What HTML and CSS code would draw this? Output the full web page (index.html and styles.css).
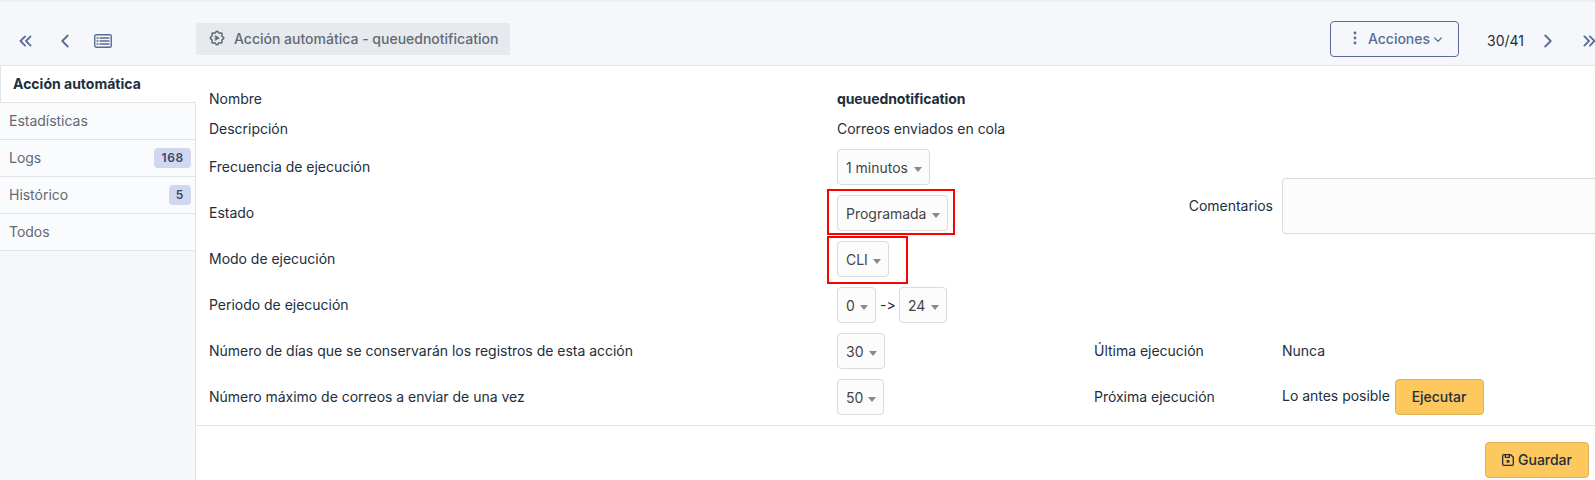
FILE: index.html
```html
<!DOCTYPE html>
<html lang="es">
<head>
<meta charset="utf-8">
<title>Acción automática</title>
<link rel="stylesheet" href="styles.css">
</head>
<body>
<header class="topbar">
  <nav class="nav-left">
    <svg class="icon" viewBox="0 0 24 24"><path d="M11 7l-5 5l5 5M17 7l-5 5l5 5"/></svg>
    <svg class="icon prev" viewBox="0 0 24 24"><path d="M15 6l-6 6l6 6"/></svg>
    <svg class="list-icon" viewBox="0 0 18 14"><rect x=".75" y=".75" width="16.5" height="12.5" rx="1.5"/><path d="M6 4h9M6 7h9M6 10h9M3 4h1M3 7h1M3 10h1"/></svg>
  </nav>
  <h1 class="title">
    <svg class="gear" viewBox="0 0 24 24"><path d="M10.325 4.317c.426-1.756 2.924-1.756 3.35 0a1.724 1.724 0 0 0 2.573 1.066c1.543-.94 3.31.826 2.37 2.37a1.724 1.724 0 0 0 1.065 2.572c1.756.426 1.756 2.924 0 3.35a1.724 1.724 0 0 0-1.066 2.573c.94 1.543-.826 3.31-2.37 2.37a1.724 1.724 0 0 0-2.572 1.065c-.426 1.756-2.924 1.756-3.35 0a1.724 1.724 0 0 0-2.573-1.066c-1.543.94-3.31-.826-2.37-2.37a1.724 1.724 0 0 0-1.065-2.572c-1.756-.426-1.756-2.924 0-3.35a1.724 1.724 0 0 0 1.066-2.573c-.94-1.543.826-3.31 2.37-2.37c1 .608 2.296.07 2.572-1.065z"/><path class="play" d="M10 9l5 3l-5 3z"/></svg>
    <span>Acción automática - queuednotification</span>
  </h1>
  <div class="nav-right">
    <button class="actions"><svg class="dots" viewBox="0 0 4 14"><circle cx="2" cy="2" r="1.4"/><circle cx="2" cy="7" r="1.4"/><circle cx="2" cy="12" r="1.4"/></svg><span>Acciones</span><svg class="caret" viewBox="0 0 8 6"><path d="M.7 1l3.3 3.4L7.3 1"/></svg></button>
    <span class="counter">30/41</span>
    <svg class="icon next" viewBox="0 0 24 24"><path d="M9 6l6 6l-6 6"/></svg>
    <svg class="icon last" viewBox="0 0 24 24"><path d="M7 7l5 5l-5 5M13 7l5 5l-5 5"/></svg>
  </div>
</header>
<div class="body">
  <aside class="tabs">
    <a class="tab active">Acción automática</a>
    <a class="tab">Estadísticas</a>
    <a class="tab">Logs<span class="badge">168</span></a>
    <a class="tab">Histórico<span class="badge">5</span></a>
    <a class="tab">Todos</a>
    <div class="rest"></div>
  </aside>
  <main class="main">
    <div class="form">
      <div class="fields">
        <div class="label">Nombre</div><div class="value"><b class="name">queuednotification</b></div>
        <div class="label">Descripción</div><div class="value">Correos enviados en cola</div>
        <div class="label">Frecuencia de ejecución</div><div class="value"><span class="select w-min">1 minutos</span></div>
        <div class="label">Estado</div><div class="value"><span class="select w-prog">Programada</span><i class="mark mark-state"></i></div>
        <div class="label">Modo de ejecución</div><div class="value"><span class="select w-cli">CLI</span><i class="mark mark-mode"></i></div>
        <div class="label">Periodo de ejecución</div><div class="value"><span class="select w-0">0</span><span class="arrow">-&gt;</span><span class="select w-24">24</span></div>
        <div class="label">Número de días que se conservarán los registros de esta acción</div><div class="value"><span class="select w-30">30</span></div>
        <div class="label">Número máximo de correos a enviar de una vez</div><div class="value"><span class="select w-50">50</span></div>
      </div>
      <div class="side">
        <div class="comment-label">Comentarios</div><div class="comment-cell"><div class="textarea"></div></div>
        <div class="label">Última ejecución</div><div class="value">Nunca</div>
        <div class="label">Próxima ejecución</div><div class="value"><span class="soon">Lo antes posible</span><button class="btn run">Ejecutar</button></div>
      </div>
    </div>
    <footer class="footer"><button class="btn save"><svg class="disk" viewBox="0 0 24 24"><path d="M6 4h10l4 4v10a2 2 0 0 1-2 2H6a2 2 0 0 1-2-2V6a2 2 0 0 1 2-2M14 4v4H8V4"/><circle cx="12" cy="14" r="1.5"/></svg><span>Guardar</span></button></footer>
  </main>
</div>
</body>
</html>
```
FILE: styles.css
```css
* { box-sizing: border-box; }
body {
  margin: 0;
  width: 1595px;
  height: 480px;
  overflow: hidden;
  background: #f5f7fb;
  color: #232e3c;
  font: 14px/20px Inter, "Noto Sans", sans-serif;
  font-feature-settings: "calt" 0;
  letter-spacing: -.02px;
}
svg { display: block; flex: none; fill: none; stroke: #5a6c98; stroke-width: 2; stroke-linecap: round; stroke-linejoin: round; }
button { font: inherit; letter-spacing: inherit; margin: 0; }
.topbar {
  display: flex;
  height: 65px;
  overflow: hidden;
  background: linear-gradient(#e9ebef 0, #eceef2 1px, #f5f7fb 3px);
}
.nav-left { display: flex; flex: none; align-items: center; width: 196px; padding: 17px 0 0 15px; }
.icon { width: 22px; height: 22px; }
.prev { margin-left: 17px; }
.list-icon { width: 18px; height: 14px; margin-left: 18px; stroke-width: 1.4; }
.title {
  display: flex;
  flex: none;
  align-items: center;
  width: 314px;
  height: 32px;
  margin: 23px 0 0;
  padding: 0 12px;
  gap: 8px;
  border-radius: 2px;
  background: #e6e9ed;
  color: #626976;
  font-size: 14px;
  font-weight: 500;
  letter-spacing: 0;
  white-space: nowrap;
}
.gear { width: 18px; height: 18px; margin-bottom: 2px; stroke: #626976; }
.play { fill: #626976; stroke-width: 1; }
.nav-right { display: flex; flex: none; align-items: flex-start; margin-left: 820px; padding-top: 21px; }
.actions {
  display: flex;
  align-items: center;
  width: 129px;
  height: 36px;
  padding: 0 17px 0 22px;
  border: 1px solid #5a6c98;
  border-radius: 4px;
  background: none;
  color: #5a6c98;
  font-weight: 500;
}
.dots { width: 4px; height: 14px; margin: 0 11px 2px 0; fill: #5a6c98; stroke: none; }
.caret { width: 8px; height: 6px; margin: 2px 0 0 4px; stroke-width: 1.2; }
.counter { width: 50px; margin: 10px 0 0 28px; }
.next { margin-top: 9px; }
.last { margin: 9px 0 0 19px; }
.body { display: flex; height: 415px; }
.tabs { display: flex; flex-direction: column; flex: none; width: 196px; }
.tab {
  display: flex;
  align-items: center;
  justify-content: space-between;
  height: 37px;
  padding: 0 4px 0 9px;
  border: solid #e2e5e8;
  border-width: 0 1px 1px 0;
  background: #fafbfc;
  color: #626976;
}
.tab.active { height: 38px; padding: 0 4px 0 12px; border-width: 1px 0 1px 1px; background: #fff; color: #232e3c; font-weight: 700; letter-spacing: 0; }
.badge {
  height: 20px;
  padding: 0 7px;
  border-radius: 4px;
  background: #d0d8ef;
  color: #3b4663;
  font-size: 12px;
  line-height: 20px;
  font-weight: 600;
  letter-spacing: .7px;
}
.rest { flex: 1; border-right: 1px solid #e2e5e8; }
.main { flex: 1; min-width: 0; border-top: 1px solid #e2e5e8; background: #fff; }
.form { display: flex; height: 360px; padding: 18px 0 0 13px; border-bottom: 1px solid #e2e5e8; }
.fields { display: grid; grid-template-columns: 628px 257px; grid-template-rows: 30px 30px repeat(6, 46px); }
.side { display: grid; flex: 1; grid-template-columns: 188px 1fr; grid-template-rows: 244px 46px 46px; }
.label { align-self: center; }
.value { position: relative; display: flex; align-items: center; }
.name { letter-spacing: -.1px; }
.select {
  display: flex;
  align-items: center;
  justify-content: space-between;
  height: 36px;
  padding: 2px 7px 0 8px;
  border: 1px solid #d9dbde;
  border-radius: 4px;
  background: #fcfcfc;
  color: #444;
}
.select::after { content: ""; margin-top: 2px; border: 4px solid transparent; border-top: 5px solid #888; border-bottom: 0; }
.w-min { width: 93px; }
.w-prog { width: 111px; }
.w-cli { width: 52px; }
.w-0 { width: 39px; }
.w-24 { width: 48px; }
.w-30 { width: 48px; }
.w-50 { width: 47px; }
.arrow { width: 23px; padding-left: 4px; }
.mark { position: absolute; left: -10px; border: 2px solid #f00; }
.mark-state { top: -1px; width: 128px; height: 46px; }
.mark-mode { top: 0; width: 81px; height: 48px; }
.comment-label { align-self: center; padding-right: 9px; text-align: right; }
.comment-cell { display: flex; align-items: center; }
.textarea { flex: 1; height: 56px; border: solid #d9dbde; border-width: 1px 0 1px 1px; border-radius: 4px 0 0 4px; background: #fcfcfc; }
.soon { width: 113px; padding-bottom: 2px; white-space: nowrap; }
.btn {
  display: flex;
  align-items: center;
  justify-content: center;
  height: 36px;
  padding: 0;
  border: 1px solid #dcb25b;
  border-radius: 4px;
  background: #fdc85e;
  color: #232e3c;
  font-weight: 500;
}
.run { width: 89px; padding-right: 1px; }
.footer { display: flex; justify-content: flex-end; padding: 16px 6px 0 0; }
.save { width: 104px; gap: 2px; padding-right: 2px; }
.disk { width: 16px; height: 16px; stroke: #232e3c; }
```
